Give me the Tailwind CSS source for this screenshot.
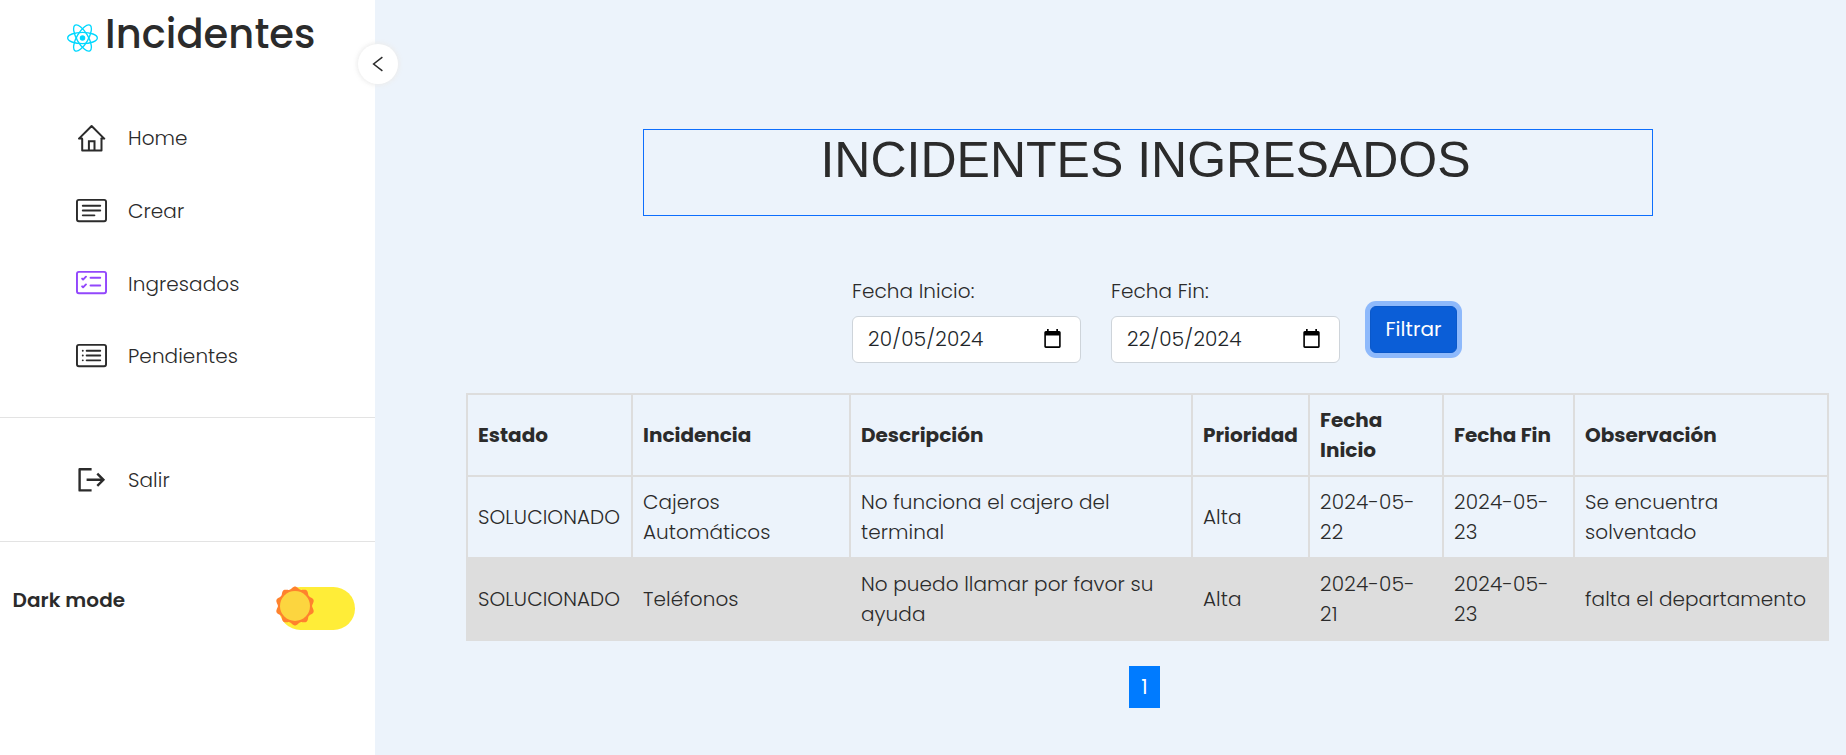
<!DOCTYPE html>
<html lang="es">
<head>
<meta charset="utf-8">
<title>Incidentes</title>
<script src="https://cdn.jsdelivr.net/npm/@tailwindcss/browser@4"></script>
</head>
<body class="h-[755px] overflow-hidden bg-[#ecf3fb] font-['Poppins','Inter',sans-serif] text-[20px] leading-[30px] font-light tracking-[0.08px] text-[#2b2b2b]">
<div class="flex h-full">
  <aside class="relative h-full w-[375px] shrink-0 bg-white">
    <button class="absolute top-[44px] left-[358px] flex size-10 items-center justify-center rounded-full bg-white shadow-[0_0_4px_#ededed,0_0_7px_#ededed]">
      <svg class="size-5" viewBox="0 0 20 20" fill="none" stroke="#2b2b2b" stroke-width="1.5"><path d="M14.4 3.2 5.600 10l8.800 6.800"/></svg>
    </button>

    <div class="flex h-[102px] items-start pl-[67px]">
      <svg class="mt-6 h-7 w-[31px]" viewBox="-11.5 -10.23 23 20.46"><circle r="2.05" fill="#00d8ff"/><g stroke="#00d8ff" fill="none"><ellipse rx="11" ry="4.2"/><ellipse rx="11" ry="4.2" transform="rotate(60)"/><ellipse rx="11" ry="4.2" transform="rotate(120)"/></g></svg>
      <h2 class="mt-[10px] ml-[7px] text-[40px] leading-[48px] font-medium">Incidentes</h2>
    </div>

    <nav>
      <a class="flex h-[72.7px] items-center gap-[21px] pl-[76px]">
        <svg class="mb-[2px] size-[31px]" viewBox="0 0 31 31" fill="none" stroke="#2b2b2b" stroke-width="2" stroke-linejoin="round" stroke-linecap="round"><path d="M6.2 17v11.5h19.3V17M3 16.6 15.6 4 28.2 16.6M3 16.6h3M25.3 16.6h3"/><path stroke-linejoin="miter" d="M12.9 28v-8.7h5.6V28"/></svg>
        <span>Home</span>
      </a>
      <a class="flex h-[72.7px] items-center gap-[21px] pl-[76px]">
        <svg class="mb-[2px] size-[31px]" viewBox="0 0 16 16" fill="#2b2b2b"><path d="M14.5 3a.5.5 0 0 1 .5.5v9a.5.5 0 0 1-.5.5h-13a.5.5 0 0 1-.5-.5v-9a.5.5 0 0 1 .5-.5zm-13-1A1.5 1.5 0 0 0 0 3.5v9A1.5 1.5 0 0 0 1.5 14h13a1.5 1.5 0 0 0 1.5-1.5v-9A1.5 1.5 0 0 0 14.5 2z"/><path d="M3 5.5a.5.5 0 0 1 .5-.5h9a.5.5 0 0 1 0 1h-9a.5.5 0 0 1-.5-.5M3 8a.5.5 0 0 1 .5-.5h9a.5.5 0 0 1 0 1h-9A.5.5 0 0 1 3 8m0 2.500a.5.5 0 0 1 .5-.5h6a.5.5 0 0 1 0 1h-6a.5.5 0 0 1-.5-.5"/></svg>
        <span>Crear</span>
      </a>
      <a class="flex h-[72.7px] items-center gap-[21px] pl-[76px]">
        <svg class="mb-[2px] size-[31px]" viewBox="0 0 16 16" fill="#9247fc"><path d="M14.5 3a.5.5 0 0 1 .5.5v9a.5.5 0 0 1-.5.5h-13a.5.5 0 0 1-.5-.5v-9a.5.5 0 0 1 .5-.5zm-13-1A1.5 1.5 0 0 0 0 3.5v9A1.5 1.5 0 0 0 1.5 14h13a1.5 1.5 0 0 0 1.5-1.5v-9A1.5 1.5 0 0 0 14.5 2z"/><path d="M7 5.5a.5.5 0 0 1 .5-.5h5a.5.5 0 0 1 0 1h-5a.5.5 0 0 1-.5-.5m-1.496-.854a.5.5 0 0 1 0 .708l-1.5 1.5a.5.5 0 0 1-.708 0l-.5-.5a.5.5 0 1 1 .708-.708l.146.147 1.146-1.147a.5.5 0 0 1 .708 0M7 9.500a.5.5 0 0 1 .5-.5h5a.5.5 0 0 1 0 1h-5a.5.5 0 0 1-.5-.5m-1.496-.854a.5.5 0 0 1 0 .708l-1.5 1.5a.5.5 0 0 1-.708 0l-.5-.5a.5.5 0 0 1 .708-.708l.146.147 1.146-1.147a.5.5 0 0 1 .708 0"/></svg>
        <span>Ingresados</span>
      </a>
      <a class="flex h-[72.7px] items-center gap-[21px] pl-[76px]">
        <svg class="mb-[2px] size-[31px]" viewBox="0 0 16 16" fill="#2b2b2b"><path d="M14.5 3a.5.5 0 0 1 .5.5v9a.5.5 0 0 1-.5.5h-13a.5.5 0 0 1-.5-.5v-9a.5.5 0 0 1 .5-.5zm-13-1A1.5 1.5 0 0 0 0 3.5v9A1.5 1.5 0 0 0 1.5 14h13a1.5 1.5 0 0 0 1.5-1.5v-9A1.5 1.5 0 0 0 14.5 2z"/><path d="M5 8a.5.5 0 0 1 .5-.5h7a.5.5 0 0 1 0 1h-7A.5.5 0 0 1 5 8m0-2.500a.5.5 0 0 1 .5-.5h7a.5.5 0 0 1 0 1h-7a.5.5 0 0 1-.5-.5m0 5a.5.5 0 0 1 .5-.5h7a.5.5 0 0 1 0 1h-7a.5.5 0 0 1-.5-.5m-1-5a.5.5 0 1 1-1 0 .5.5 0 0 1 1 0M4 8a.5.5 0 1 1-1 0 .5.5 0 0 1 1 0m0 2.500a.5.5 0 1 1-1 0 .5.5 0 0 1 1 0"/></svg>
        <span>Pendientes</span>
      </a>
    </nav>
    <hr class="mt-[24px] border-t border-[#e3e3e3]">
    <a class="flex h-[123px] items-center gap-[21px] pt-px pl-[76px]">
      <svg class="size-[31px]" viewBox="0 0 31 31" fill="none" stroke="#2b2b2b" stroke-width="2.4"><path stroke-linejoin="round" d="M15.600 5.200H3.600v21.200h12M10.600 15.800h16.400"/><path d="m21.300 9.700 6.100 6.100-6.100 6.100"/></svg>
      <span>Salir</span>
    </a>
    <hr class="border-t border-[#e3e3e3]">
    <div class="flex items-start justify-between pt-[43px] pr-5 pl-[12.5px]">
      <span class="font-semibold">Dark mode</span>
      <div class="relative mt-[2px] h-[43px] w-[76px] rounded-full bg-[#ffed38]">
        <svg id="sun" class="absolute -top-px -left-[4px] size-[40px]" viewBox="-20 -20 40 40"><path fill="#ff822d"/><circle r="15" fill="#fcd53f"/></svg>
      </div>
    </div>
  </aside>

  <main class="flex flex-1 flex-col pl-[91px]">
    <div class="mt-[129px] ml-[177px] h-[87px] w-[1010px] border border-[#0d6efd] pr-[5px] text-center">
      <h1 class="font-['Liberation_Sans',Arial,sans-serif] text-[50px] leading-[60px] font-normal tracking-normal">INCIDENTES INGRESADOS</h1>
    </div>

    <form class="mt-[60px] ml-[386px] flex h-[117px] items-start">
      <div class="w-[259px]">
        <label class="block">Fecha Inicio:</label>
        <div class="mt-[10px] flex h-[47px] w-[229px] items-center justify-between rounded-md border border-[#ced4da] bg-white pr-[19px] pb-[2px] pl-[15px] text-[#212529]">
          <span class="tracking-[0.2px]">20/05/2024</span>
          <svg class="h-[19px] w-[17px]" viewBox="0 0 17 19"><path fill="#000" fill-rule="evenodd" d="M3 0h1.700v2h7.600V0H14v2h1.200Q16.700 2 16.700 3.500v14q0 1.400-1.500 1.400H1.800Q.3 18.900.3 17.500v-14Q.3 2 1.800 2H3zM1.900 6.500v10.800h13.200V6.500z"/></svg>
        </div>
      </div>
      <div class="w-[259px]">
        <label class="block">Fecha Fin:</label>
        <div class="mt-[10px] flex h-[47px] w-[229px] items-center justify-between rounded-md border border-[#ced4da] bg-white pr-[19px] pb-[2px] pl-[15px] text-[#212529]">
          <span class="tracking-[0.2px]">22/05/2024</span>
          <svg class="h-[19px] w-[17px]" viewBox="0 0 17 19"><path fill="#000" fill-rule="evenodd" d="M3 0h1.700v2h7.600V0H14v2h1.200Q16.700 2 16.700 3.500v14q0 1.400-1.500 1.400H1.800Q.3 18.900.3 17.500v-14Q.3 2 1.800 2H3zM1.900 6.500v10.800h13.200V6.500z"/></svg>
        </div>
      </div>
      <button class="mt-[30px] h-[47px] w-[87px] rounded-md border border-[#0a58ca] bg-[#0b5ed7] pb-[2px] font-normal text-white shadow-[0_0_0_5px_#8eb9fb]">Filtrar</button>
    </form>

    <table class="w-[1363px] table-fixed border-collapse text-left">
      <colgroup><col class="w-[165px]"><col class="w-[218px]"><col class="w-[342px]"><col class="w-[117px]"><col class="w-[134px]"><col class="w-[131px]"><col class="w-[254px]"></colgroup>
      <thead>
        <tr class="h-[82px] font-semibold tracking-normal">
          <th class="border-2 border-[#ddd] px-[10px]">Estado</th><th class="border-2 border-[#ddd] px-[10px]">Incidencia</th><th class="border-2 border-[#ddd] px-[10px]">Descripción</th><th class="border-2 border-[#ddd] px-[10px]">Prioridad</th><th class="border-2 border-[#ddd] px-[10px]">Fecha<br>Inicio</th><th class="border-2 border-[#ddd] px-[10px]">Fecha Fin</th><th class="border-2 border-[#ddd] px-[10px]">Observación</th>
        </tr>
      </thead>
      <tbody>
        <tr class="h-[82px]">
          <td class="border-2 border-[#ddd] px-[10px]">SOLUCIONADO</td><td class="border-2 border-[#ddd] px-[10px]">Cajeros<br>Automáticos</td><td class="border-2 border-[#ddd] px-[10px]">No funciona el cajero del<br>terminal</td><td class="border-2 border-[#ddd] px-[10px]">Alta</td><td class="border-2 border-[#ddd] px-[10px] tracking-[0.25px]">2024-05-<br>22</td><td class="border-2 border-[#ddd] px-[10px] tracking-[0.25px]">2024-05-<br>23</td><td class="border-2 border-[#ddd] px-[10px]">Se encuentra<br>solventado</td>
        </tr>
        <tr class="h-[82px] bg-[#ddd]">
          <td class="border-2 border-[#ddd] px-[10px]">SOLUCIONADO</td><td class="border-2 border-[#ddd] px-[10px]">Teléfonos</td><td class="border-2 border-[#ddd] px-[10px]">No puedo llamar por favor su<br>ayuda</td><td class="border-2 border-[#ddd] px-[10px]">Alta</td><td class="border-2 border-[#ddd] px-[10px] tracking-[0.25px]">2024-05-<br>21</td><td class="border-2 border-[#ddd] px-[10px] tracking-[0.25px]">2024-05-<br>23</td><td class="border-2 border-[#ddd] px-[10px]">falta el departamento</td>
        </tr>
      </tbody>
    </table>

    <div class="mt-[25px] ml-[663px] flex h-[42px] w-[31px] items-center justify-center bg-[#007bff] font-normal text-white">1</div>
  </main>
</div>
<script>
  // Scalloped rim of the sun: ten rounded rays around the disc
  let d = '';
  for (let i = 0; i <= 240; i++) {
    const a = i / 240 * 2 * Math.PI, r = 18.3 + 1.2 * Math.cos(10 * a);
    d += (i ? 'L' : 'M') + (r * Math.sin(a)).toFixed(2) + ' ' + (-r * Math.cos(a)).toFixed(2);
  }
  document.querySelector('#sun path').setAttribute('d', d + 'Z');
</script>
</body>
</html>
